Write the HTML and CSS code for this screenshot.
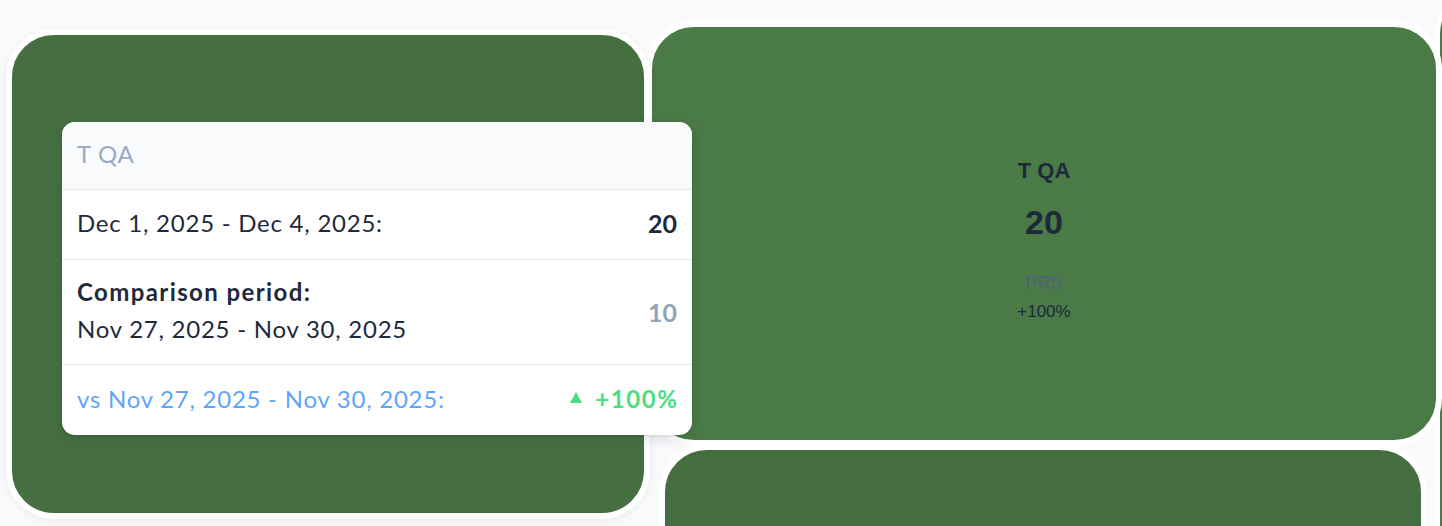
FILE: index.html
```html
<!DOCTYPE html>
<html>
<head>
<meta charset="utf-8">
<link rel="stylesheet" href="styles.css">
</head>
<body>
<div class="treemap">
  <div class="cell cell-a"></div>
  <div class="col-right">
    <div class="cell cell-b">
      <div class="node-title">T QA</div>
      <div class="node-value">20</div>
      <div class="node-sub">PRS</div>
      <div class="node-change">+100%</div>
    </div>
    <div class="cell cell-c"></div>
  </div>
  <div class="cell cell-d"></div>

  <div class="tooltip">
    <div class="tt-head">T QA</div>
    <div class="tt-row tt-current">
      <span>Dec 1, 2025 - Dec 4, 2025:</span>
      <span class="tt-num">20</span>
    </div>
    <div class="tt-row tt-compare">
      <div class="tt-lines">
        <div class="tt-strong">Comparison period:</div>
        <div>Nov 27, 2025 - Nov 30, 2025</div>
      </div>
      <span class="tt-num tt-muted">10</span>
    </div>
    <div class="tt-row tt-vs">
      <span>vs Nov 27, 2025 - Nov 30, 2025:</span>
      <span class="tt-up"><span class="tri"></span><span class="pct">+100%</span></span>
    </div>
  </div>
</div>
</body>
</html>
```

FILE: styles.css
```css
* { box-sizing: border-box; }
html, body { margin: 0; padding: 0; }
body {
  background: #f8fafc;
  width: 1442px;
  height: 526px;
  overflow: hidden;
  font-family: "Liberation Sans", Arial, sans-serif;
}
.treemap {
  position: relative;
  display: flex;
  align-items: flex-start;
  width: 1442px;
  height: 526px;
  overflow: hidden;
}
.cell {
  border: 6px solid #ffffff;
  border-radius: 48px;
  flex-shrink: 0;
}
.cell-a {
  z-index: 2;
  background: #456f41;
  width: 644px;
  height: 490px;
  margin: 29px 0 0 6px;
  box-shadow: 0 2px 8px rgba(15, 23, 42, 0.06);
}
.col-right {
  display: flex;
  flex-direction: column;
  width: 796px;
  margin: 21px 0 0 -4px;
  flex-shrink: 0;
  z-index: 1;
}
.cell-b {
  background: #4a7a46;
  height: 425px;
  display: flex;
  flex-direction: column;
  align-items: center;
  padding-top: 131px;
  color: #1e293b;
}
.cell-c {
  background: #446e40;
  height: 300px;
  margin: -2px 15px 0 13px;
}
.cell-d {
  background: #4a7a46;
  width: 200px;
  height: 600px;
  margin: -14px 0 0 -6px;
  border-width: 4px;
}
.node-title {
  font-size: 22px;
  font-weight: 700;
  line-height: 26px;
}
.node-value {
  font-size: 34px;
  font-weight: 700;
  line-height: 40px;
  margin-top: 18px;
}
.node-sub {
  font-size: 18px;
  line-height: 22px;
  margin-top: 30px;
  color: #4f607a;
}
.node-change {
  font-size: 17px;
  line-height: 20px;
  margin-top: 8px;
}

.tooltip {
  position: absolute;
  left: 62px;
  top: 122px;
  width: 630px;
  height: 313px;
  background: #ffffff;
  border-radius: 13px;
  overflow: hidden;
  box-shadow: 0 4px 14px rgba(15, 23, 42, 0.12), 0 1px 3px rgba(15, 23, 42, 0.08);
  z-index: 5;
  font-family: Lato, "Open Sans", sans-serif;
  font-size: 24px;
  letter-spacing: 0.75px;
  color: #1e293b;
}
.tt-head {
  height: 68px;
  background: #f8fafc;
  border-bottom: 1px solid #e2e8f0;
  color: #9aabc4;
  padding: 0 15px 4px;
  display: flex;
  align-items: center;
}
.tt-row {
  display: flex;
  align-items: center;
  justify-content: space-between;
  padding: 0 15px;
  border-bottom: 1px solid #e2e8f0;
}
.tt-current { height: 70px; padding-bottom: 4px; }
.tt-compare { height: 105px; }
.tt-vs {
  height: 70px;
  border-bottom: none;
  color: #60a5fa;
  padding-bottom: 3px;
}
.tt-lines {
  display: flex;
  flex-direction: column;
  gap: 9px;
  line-height: 28px;
  padding-bottom: 3px;
}
.tt-strong { font-weight: 700; letter-spacing: 1.4px; }
.tt-num {
  font-weight: 700;
  font-size: 25px;
  letter-spacing: 0;
}
.tt-muted { color: #94a3b8; }
.tt-up {
  color: #4ade80;
  font-weight: 700;
  display: flex;
  align-items: center;
}
.pct {
  font-size: 24px;
  letter-spacing: 1.6px;
  margin-right: -1.6px;
}
.tri {
  width: 0;
  height: 0;
  border-left: 6.5px solid transparent;
  border-right: 6.5px solid transparent;
  border-bottom: 11px solid #4ade80;
  margin-right: 13px;
  margin-top: -2px;
}
```
